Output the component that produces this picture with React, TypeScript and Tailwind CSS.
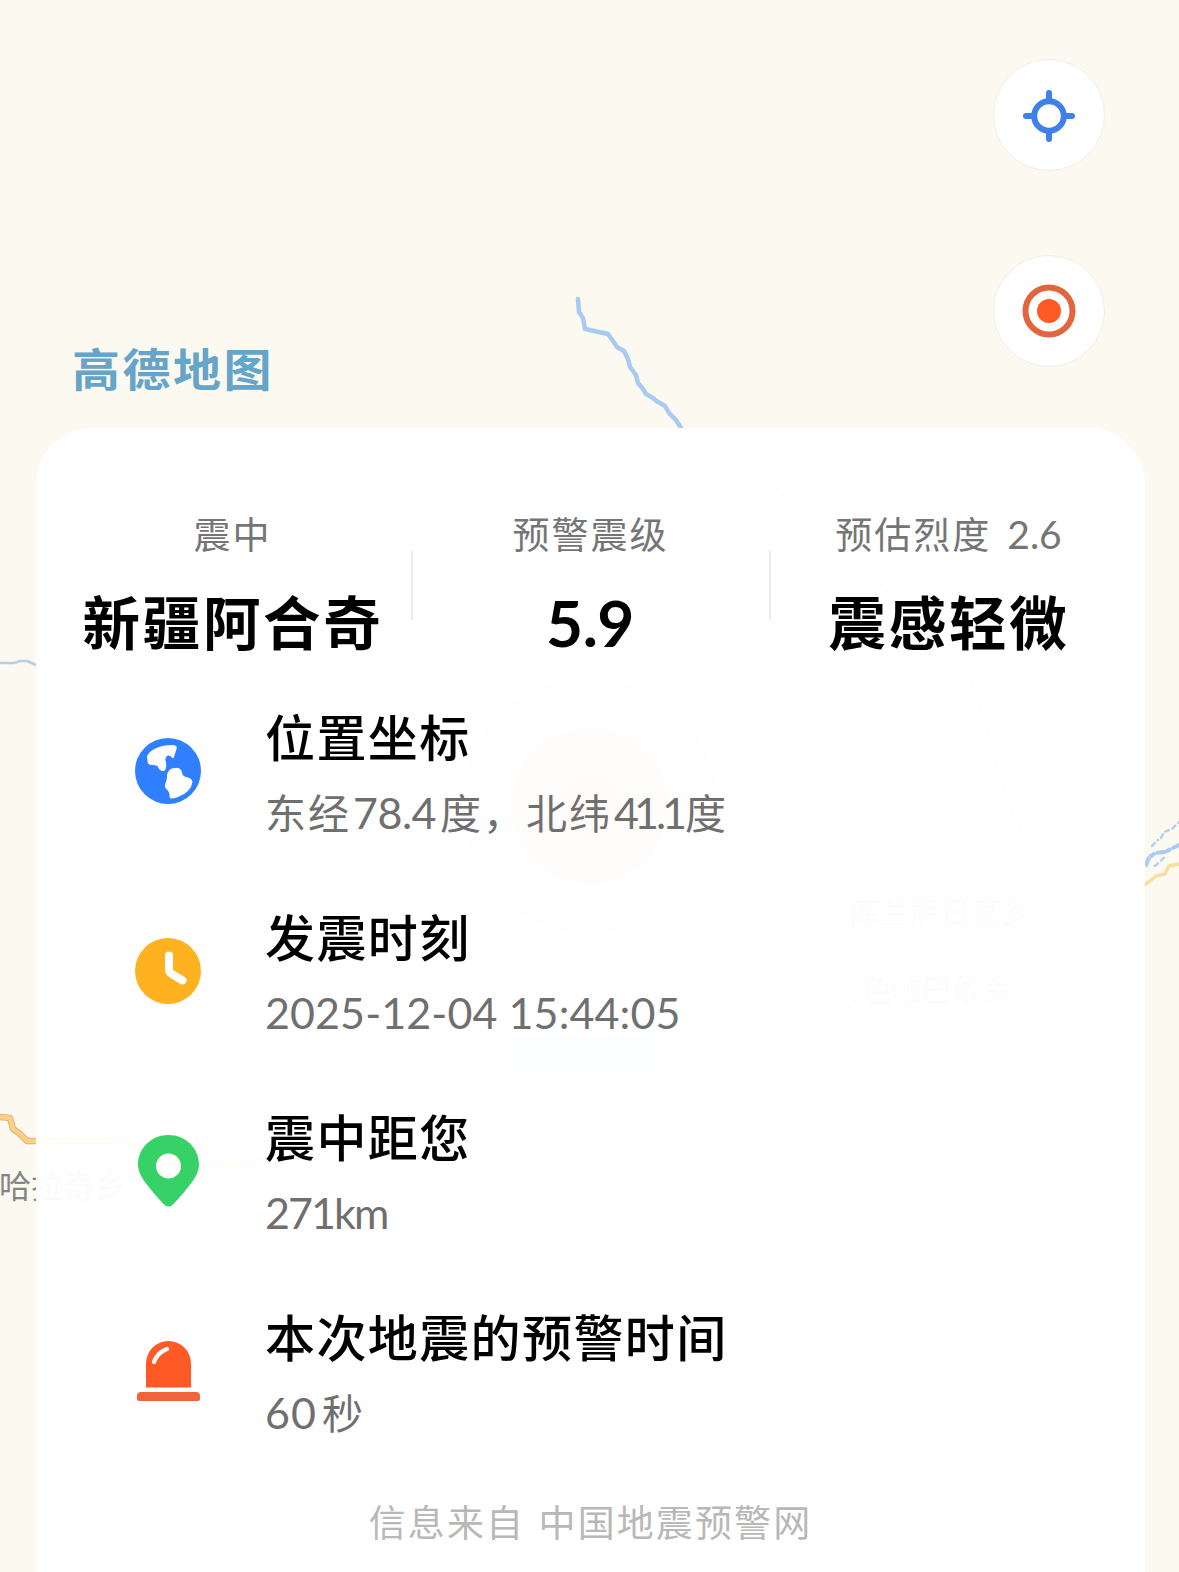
import type { ReactNode } from "react";

function MapLayer() {
  return (
    <svg className="absolute inset-0" width="1179" height="1572" viewBox="0 0 1179 1572" fill="none" strokeLinejoin="round" strokeLinecap="round">
      {/* river */}
      <path
        d="M578 299L579 312L583 318L585 329L599 332L608 334L613 341L617 347L624 351L628 359L630 367L636 375L638 383L643 389L646 394L653 398L658 402L665 406L669 413L676 420L681 428L690 442L730 466L785 495L850 560L930 625L966 664L985 720L1000 780L1020 830L1048 862"
        stroke="#a9cbf3"
        strokeWidth="4.5"
      />
      <path d="M0 663L14 663L20 661L27 661L34 664L44 668" stroke="#b9cfe8" strokeWidth="2.5" />
      <path d="M1146 864L1149 858L1155 853L1165 852L1179 845" stroke="#a9cbf3" strokeWidth="4" strokeDasharray="7 3 3 4" />
      <path d="M1147 866L1150 855M1152 846L1158 840M1161 838L1164 832L1172 829L1179 822M1155 866L1166 856" stroke="#b4d1f4" strokeWidth="2.5" strokeDasharray="4 4" />
      {/* roads */}
      <path d="M1145 885L1156 876L1165 874L1169 866L1179 864" stroke="#f6dfa0" strokeWidth="3.5" />
      <path d="M0 1117L10 1118L13 1129L19 1133L27 1141L120 1141L190 1170L260 1160L310 1130" stroke="#e3b56c" strokeWidth="6.5" />
      <path d="M0 1117L10 1118L13 1129L19 1133L27 1141L120 1141L190 1170L260 1160L310 1130" stroke="#fcd08a" strokeWidth="4.5" />
      <path d="M430 1105L540 1095L620 1060L650 1040M780 1054L830 1040L860 990L910 962" stroke="#b9d6f6" strokeWidth="4" />
      {/* epicentre */}
      <circle cx="590" cy="806" r="130" fill="#f4511e" fillOpacity=".16" />
      <circle cx="590" cy="806" r="78" fill="#f4511e" fillOpacity=".35" />
      <circle cx="590" cy="806" r="30" fill="#f4511e" fillOpacity=".6" />
      <rect x="508" y="1034" width="142" height="38" fill="#a5cdf7" />
    </svg>
  );
}

function RoundButton({ children }: { children: ReactNode }) {
  return (
    <button className="flex size-28 items-center justify-center rounded-full border border-[#f0eee8] bg-white">
      {children}
    </button>
  );
}

function GlobeIcon() {
  return (
    <svg width="66" height="66" viewBox="0 0 66 66">
      <circle cx="33" cy="33" r="33" fill="#2f7fff" />
      <path
        d="M12 18C16 11 25 7 37 7Q43 7 41.500 11L39 19Q38.500 21 37 19.500Q34 16 31.500 18.500Q29.500 21 31 24Q32 32 28.500 33Q24 33 22.500 28Q20 27 17 27Q12.500 27 12.500 23Z"
        fill="#fff"
      />
      <path
        d="M33 34Q35 30 40 30Q45 29 47 34Q47 38 51 39Q57 40 57.500 44Q56 54 43 59Q35 62 34.500 59Q35 54 31.500 51Q29 49 30.500 45Q32 42 32 39Q31.500 36 33 34Z"
        fill="#fff"
      />
    </svg>
  );
}

function ClockIcon() {
  return (
    <svg width="66" height="66" viewBox="0 0 66 66">
      <circle cx="33" cy="33" r="33" fill="#ffb21f" />
      <path d="M34 17.500V31.500Q34 34 36 35.500L47.500 42.500" stroke="#fff" strokeWidth="8" strokeLinecap="round" fill="none" />
    </svg>
  );
}

function PinIcon() {
  return (
    <svg width="66" height="72" viewBox="0 0 66 72">
      <path
        fillRule="evenodd"
        d="M33.500 0C50.500 0 64 13 64 29.500C64 37 60 43 56 48.500Q48 59 38.500 69Q33.500 74 28.500 69Q19 59 11 48.500C7 43 3 37 3 29.500C3 13 16.500 0 33.500 0ZM33.500 18.500A12.500 12.500 0 1 0 33.500 43.500A12.500 12.500 0 1 0 33.500 18.500Z"
        fill="#37d267"
      />
    </svg>
  );
}

function AlarmIcon() {
  return (
    <svg width="66" height="60" viewBox="0 0 66 60">
      <path d="M11 46.500V22.500A22.500 22.500 0 0 1 56 22.500V46.500Z" fill="#ff5a26" />
      <path d="M2 58V55Q2 51 6 51H61Q65 51 65 55V58Q65 60 63 60H4Q2 60 2 58Z" fill="#f1633a" />
      <path d="M19 21Q22 12 32 8" stroke="#fff" strokeWidth="4.200" strokeLinecap="round" fill="none" />
    </svg>
  );
}

const stats = [
  { label: "震中", value: "新疆阿合奇" },
  { label: "预警震级", value: <span className="relative top-0.5 right-px font-['Lato'] text-[64px] tracking-[-0.5px]">5.9</span> },
  {
    label: (
      <>
        预估烈度<span className="ml-4 font-['Lato'] text-[39px] tracking-normal">2.6</span>
      </>
    ),
    value: "震感轻微",
  },
];

const details = [
  {
    icon: <GlobeIcon />,
    title: "位置坐标",
    text: (
      <>
        东经<span className="ml-0.5 font-['Lato'] text-[43px] tracking-[-0.5px]">78.4</span>
        <span className="ml-1">度，北纬</span>
        <span className="ml-0.5 font-['Lato'] text-[43px]">
          <span className="tracking-[-5px]">4</span>
          <span className="tracking-[-3px]">1</span>
          <span className="tracking-[-4px]">.</span>
          <span className="tracking-[-2px]">1</span>
        </span>
        <span>度</span>
      </>
    ),
  },
  {
    icon: <ClockIcon />,
    title: "发震时刻",
    text: <span className="font-['Lato'] text-[43px] tracking-[0.1px]">2025-12-04 15:44:05</span>,
  },
  {
    icon: <PinIcon />,
    title: "震中距您",
    text: <span className="font-['Lato'] text-[43px] tracking-[-1.9px]">271km</span>,
  },
  {
    icon: <AlarmIcon />,
    title: "本次地震的预警时间",
    text: (
      <>
        <span className="font-['Lato'] text-[43px] tracking-[1px]">60</span>
        <span className="ml-[5px]">秒</span>
      </>
    ),
  },
];

export default function App() {
  return (
    <main className="relative flex h-[1572px] w-[1179px] flex-col overflow-hidden bg-[#fcf9f0] font-['Noto_Sans_CJK_SC',sans-serif]">
      <MapLayer />
      <span className="absolute top-[1162px] left-[-1px] text-[32px] leading-[44px] whitespace-nowrap text-[#858585]">哈拉奇乡</span>
      <span className="absolute top-[888px] left-[850px] text-[30px] leading-[44px] text-[#999]">库兰萨日克乡</span>
      <span className="absolute top-[966px] left-[862px] text-[30px] leading-[44px] text-[#999]">色帕巴依乡</span>

      <header className="relative flex h-[428px] shrink-0 items-end justify-between pr-[74px] pb-[61px] pl-[72px]">
        <div className="mb-[-30px] origin-center scale-y-94 text-[48px] leading-[60px] font-bold tracking-[2.5px] text-[#65a5ca]">高德地图</div>
        <div className="flex flex-col gap-[84px]">
          <RoundButton>
            <svg className="mt-0.5" width="54" height="54" viewBox="0 0 54 54" fill="none" stroke="#3f80ea" strokeLinecap="round">
              <circle cx="27" cy="27" r="14.800" strokeWidth="6" />
              <path d="M27 4V10M27 44V50M4 27H10M44 27H50" strokeWidth="6" />
            </svg>
          </RoundButton>
          <RoundButton>
            <svg width="54" height="54" viewBox="0 0 54 54">
              <circle cx="27" cy="27" r="23.500" stroke="#e1663e" strokeWidth="6" fill="none" />
              <circle cx="27" cy="27" r="12" fill="#ff5a23" />
            </svg>
          </RoundButton>
        </div>
      </header>

      <section className="relative mr-[34px] ml-9 flex flex-1 flex-col rounded-t-[56px] bg-white/97 pt-[75px]">
        <div className="mx-[17px] flex">
          {stats.map((s, i) => (
            <div key={i} className="relative flex w-[358px] shrink-0 flex-col items-center whitespace-nowrap">
              {i > 0 && <i className="absolute top-12 left-0 h-[69px] w-0.5 bg-[#ececec]" />}
              <p className="h-[60px] pl-px text-[37px] leading-[60px] tracking-[2px] text-[#757575]">{s.label}</p>
              <p className="mt-[17px] h-[80px] pl-0.5 text-[57.5px] leading-[80px] font-bold tracking-[2.7px] text-black">{s.value}</p>
            </div>
          ))}
        </div>

        <ul className="mt-[40px]">
          {details.map((d) => (
            <li key={d.title} className="flex h-[200px] pl-[99px]">
              <div className="mt-[7px] flex h-[128px] w-[66px] items-center justify-center">{d.icon}</div>
              <div className="ml-16 whitespace-nowrap">
                <h2 className="h-[70px] text-[50px] leading-[70px] font-medium tracking-[1.4px] text-black">{d.title}</h2>
                <p className="mt-[6px] h-[70px] text-[41px] leading-[70px] tracking-[2px] text-[#6f6f6f]">{d.text}</p>
              </div>
            </li>
          ))}
        </ul>

        <footer className="-mt-1 text-center text-[37px] leading-[50px] tracking-[2.1px] text-[#b8b8b8] [word-spacing:3px]">信息来自 中国地震预警网</footer>
      </section>
    </main>
  );
}
